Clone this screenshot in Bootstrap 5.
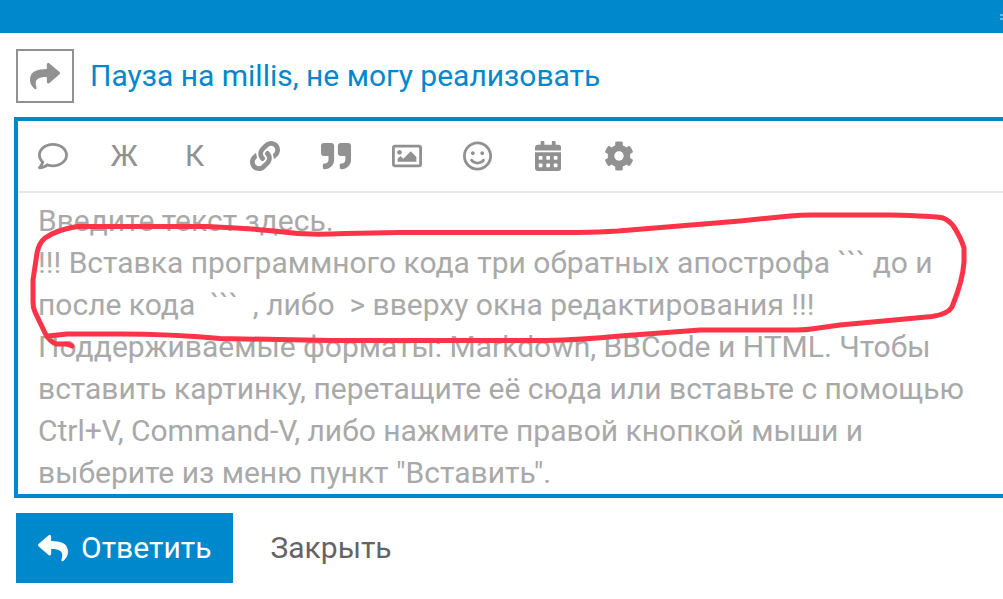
<!DOCTYPE html>
<html lang="ru">
<head>
<meta charset="utf-8">
<meta name="viewport" content="width=device-width, initial-scale=1">
<title>Ответ в теме</title>
<link rel="stylesheet" href="https://cdn.jsdelivr.net/npm/bootstrap@5.3.0/dist/css/bootstrap.min.css">
<script defer src="https://cdn.jsdelivr.net/npm/bootstrap@5.3.0/dist/js/bootstrap.bundle.min.js"></script>
<style>
  :root { --brand: #0088cc; --icon: #919191; }
  body { font-family: Roboto, "Liberation Sans", sans-serif; font-size: 30px; line-height: 42px; overflow-x: hidden; }
  .topbar { height: 33px; background: var(--brand); }
  .grip { width: 3px; height: 6px; margin-top: 1px; border: solid #66b8e0; border-width: 2px 0; }
  .btn { --bs-btn-border-radius: 0; --bs-btn-font-size: 30px; --bs-btn-line-height: 42px; }
  .icon { height: 30px; fill: currentColor; display: block; }
  .jump { width: 58px; height: 54px; border: 2px solid var(--icon); color: var(--icon); }
  .topic { color: var(--brand); }
  .topic-row { padding: 16px 16px 14px; }
  .editor { border: 4px solid var(--brand); border-right: 0; margin-left: 14px; }
  .tools { height: 72px; border-bottom: 2px solid #e9e9e9; }
  .tool-row { display: grid; grid-template-columns: repeat(9, 1fr); width: 100%; max-width: 636px; }
  .tool-row .btn { --bs-btn-color: var(--icon); }
  .message { display: block; width: 100%; border: 0; outline: 0; resize: none; overflow: hidden; padding: 7px 20px 0; line-height: 42px; background: transparent; }
  .message::placeholder { color: #a9a9a9; opacity: 1; }
  .marker { position: absolute; left: 0; top: 0; width: 960px; height: 180px; pointer-events: none; }
  .actions { padding: 15px 16px; gap: 37px; }
  .reply { --bs-btn-color: #fff; --bs-btn-bg: var(--brand); --bs-btn-padding-x: 22px; --bs-btn-padding-y: 14px; gap: 13px; }
  .dismiss { --bs-btn-color: #646464; --bs-btn-padding-x: 0; }
</style>
</head>
<body class="bg-white">
<header class="topbar d-flex justify-content-end align-items-center"><span class="grip"></span></header>

<main>
  <div class="topic-row d-flex align-items-center gap-3">
    <button type="button" class="btn jump p-0 d-flex align-items-center justify-content-center" aria-label="Тип ответа">
      <svg class="icon" viewBox="0 0 512 512"><path id="arrow" d="M503.691 189.836L327.687 37.851C312.281 24.546 288 35.347 288 56.015v80.053C127.371 137.907 0 170.1 0 322.326c0 61.441 39.581 122.309 83.333 154.132 13.653 9.931 33.111-2.533 28.077-18.631C66.066 312.814 132.917 274.316 288 272.085V360c0 20.7 24.3 31.453 39.687 18.164l176.004-152c11.071-9.562 11.086-26.753 0-36.328z"/></svg>
    </button>
    <a href="#" class="topic text-decoration-none">Пауза на millis, не могу реализовать</a>
  </div>

  <section class="editor">
    <div class="tools d-flex align-items-center">
      <div class="tool-row" role="toolbar" aria-label="Форматирование">
        <button type="button" class="btn p-0 d-flex align-items-center justify-content-center" aria-label="Цитировать сообщение"><svg class="icon" viewBox="0 0 512 512"><path d="M256 32C114.6 32 0 125.1 0 240c0 47.6 19.9 91.2 52.9 126.3C38 405.7 7 439.1 6.5 439.5c-6.6 7-8.4 17.2-4.6 26S14.4 480 24 480c61.5 0 110-25.7 139.1-46.3C192 442.8 223.2 448 256 448c141.4 0 256-93.1 256-208S397.4 32 256 32zm0 368c-26.7 0-53.1-4.1-78.4-12.1l-22.7-7.2-19.5 13.8c-14.3 10.1-33.9 21.4-57.5 29 7.3-12.1 14.4-25.7 19.9-40.2l10.6-28.1-20.6-21.8C69.7 314.1 48 282.2 48 240c0-88.2 93.3-160 208-160s208 71.8 208 160-93.3 160-208 160z"/></svg></button>
        <button type="button" class="btn p-0">Ж</button>
        <button type="button" class="btn p-0">К</button>
        <button type="button" class="btn p-0 d-flex align-items-center justify-content-center" aria-label="Ссылка"><svg class="icon" viewBox="0 0 512 512"><path d="M326.612 185.391c59.747 59.809 58.927 155.698.36 214.59-.11.12-.24.25-.36.37l-67.2 67.2c-59.27 59.27-155.699 59.262-214.96 0-59.27-59.26-59.27-155.7 0-214.96l37.106-37.106c9.84-9.84 26.786-3.3 27.294 10.606.648 17.722 3.826 35.527 9.69 52.721 1.986 5.822.567 12.262-3.783 16.612l-13.087 13.087c-28.026 28.026-28.905 73.66-1.155 101.96 28.024 28.579 74.086 28.749 102.325.51l67.2-67.19c28.191-28.191 28.073-73.757 0-101.83-3.701-3.694-7.429-6.564-10.341-8.569a16.037 16.037 0 0 1-6.947-12.606c-.396-10.567 3.348-21.456 11.698-29.806l21.054-21.055c5.521-5.521 14.182-6.199 20.584-1.731a152.482 152.482 0 0 1 20.522 17.197zM467.547 44.449c-59.261-59.262-155.69-59.27-214.96 0l-67.2 67.2c-.12.12-.25.25-.36.37-58.566 58.892-59.387 154.781.36 214.59a152.454 152.454 0 0 0 20.521 17.196c6.402 4.468 15.064 3.789 20.584-1.731l21.054-21.055c8.35-8.35 12.094-19.239 11.698-29.806a16.037 16.037 0 0 0-6.947-12.606c-2.912-2.005-6.64-4.875-10.341-8.569-28.073-28.073-28.191-73.639 0-101.83l67.2-67.19c28.239-28.239 74.3-28.069 102.325.51 27.75 28.3 26.872 73.934-1.155 101.96l-13.087 13.087c-4.35 4.35-5.769 10.79-3.783 16.612 5.864 17.194 9.042 34.999 9.69 52.721.509 13.906 17.454 20.446 27.294 10.606l37.106-37.106c59.271-59.259 59.271-155.699.001-214.959z"/></svg></button>
        <button type="button" class="btn p-0 d-flex align-items-center justify-content-center" aria-label="Цитата"><svg class="icon" viewBox="0 0 512 512"><path d="M464 32H336c-26.5 0-48 21.5-48 48v128c0 26.5 21.5 48 48 48h80v64c0 35.3-28.7 64-64 64h-8c-13.3 0-24 10.7-24 24v48c0 13.3 10.7 24 24 24h8c88.4 0 160-71.6 160-160V80c0-26.5-21.5-48-48-48zm-288 0H48C21.5 32 0 53.5 0 80v128c0 26.5 21.5 48 48 48h80v64c0 35.3-28.7 64-64 64h-8c-13.3 0-24 10.7-24 24v48c0 13.3 10.7 24 24 24h8c88.4 0 160-71.6 160-160V80c0-26.5-21.5-48-48-48z"/></svg></button>
        <button type="button" class="btn p-0 d-flex align-items-center justify-content-center" aria-label="Изображение"><svg class="icon" viewBox="0 0 512 512"><path d="M464 64H48C21.49 64 0 85.49 0 112v288c0 26.51 21.49 48 48 48h416c26.51 0 48-21.49 48-48V112c0-26.51-21.49-48-48-48zm-6 336H54a6 6 0 0 1-6-6V118a6 6 0 0 1 6-6h404a6 6 0 0 1 6 6v276a6 6 0 0 1-6 6zM128 152c-22.091 0-40 17.909-40 40s17.909 40 40 40 40-17.909 40-40-17.909-40-40-40zM96 352h320v-80l-87.515-87.515c-4.686-4.686-12.284-4.686-16.971 0L192 304l-39.515-39.515c-4.686-4.686-12.284-4.686-16.971 0L96 304v48z"/></svg></button>
        <button type="button" class="btn p-0 d-flex align-items-center justify-content-center" aria-label="Эмодзи"><svg class="icon" viewBox="0 0 496 512"><path d="M248 8C111 8 0 119 0 256s111 248 248 248 248-111 248-248S385 8 248 8zm0 448c-110.3 0-200-89.7-200-200S137.7 56 248 56s200 89.7 200 200-89.7 200-200 200zm-80-216c17.7 0 32-14.3 32-32s-14.3-32-32-32-32 14.3-32 32 14.3 32 32 32zm160 0c17.7 0 32-14.3 32-32s-14.3-32-32-32-32 14.3-32 32 14.3 32 32 32zm4 72.6c-20.8 25-51.5 39.4-84 39.4s-63.2-14.3-84-39.4c-8.5-10.2-23.7-11.5-33.8-3.1-10.2 8.5-11.5 23.6-3.1 33.8 30 36 74.1 56.6 120.9 56.6s90.9-20.6 120.9-56.6c8.5-10.2 7.1-25.3-3.1-33.8-10.1-8.4-25.3-7.1-33.8 3.1z"/></svg></button>
        <button type="button" class="btn p-0 d-flex align-items-center justify-content-center" aria-label="Дата"><svg class="icon" viewBox="0 0 448 512"><path d="M400 64h-48V16c0-8.8-7.2-16-16-16h-32c-8.8 0-16 7.2-16 16v48H160V16c0-8.8-7.2-16-16-16h-32c-8.8 0-16 7.2-16 16v48H48C21.5 64 0 85.5 0 112v48h448v-48c0-26.5-21.5-48-48-48z"/><path fill-rule="evenodd" d="M0 464c0 26.500 21.500 48 48 48h352c26.500 0 48-21.500 48-48V192H0zM76 256h40q12 0 12 12v40q0 12-12 12H76q-12 0-12-12v-40q0-12 12-12zm128 0h40q12 0 12 12v40q0 12-12 12h-40q-12 0-12-12v-40q0-12 12-12zm128 0h40q12 0 12 12v40q0 12-12 12h-40q-12 0-12-12v-40q0-12 12-12zM76 384h40q12 0 12 12v40q0 12-12 12H76q-12 0-12-12v-40q0-12 12-12zm128 0h40q12 0 12 12v40q0 12-12 12h-40q-12 0-12-12v-40q0-12 12-12zm128 0h40q12 0 12 12v40q0 12-12 12h-40q-12 0-12-12v-40q0-12 12-12z"/></svg></button>
        <button type="button" class="btn p-0 d-flex align-items-center justify-content-center" aria-label="Настройки"><svg class="icon" viewBox="0 0 512 512"><path d="M487.4 315.7l-42.6-24.6c4.3-23.2 4.3-47 0-70.2l42.6-24.6c4.9-2.8 7.1-8.6 5.5-14-11.1-35.6-30-67.8-54.7-94.6-3.8-4.1-10-5.1-14.8-2.3L380.8 110c-17.9-15.4-38.5-27.3-60.8-35.1V25.8c0-5.6-3.9-10.5-9.4-11.7-36.7-8.2-74.3-7.8-109.2 0-5.5 1.2-9.4 6.1-9.4 11.7V75c-22.2 7.9-42.8 19.8-60.8 35.1L88.7 85.5c-4.9-2.8-11-1.9-14.8 2.3-24.7 26.7-43.6 58.9-54.7 94.6-1.7 5.4.6 11.2 5.5 14L67.3 221c-4.3 23.2-4.3 47 0 70.2l-42.6 24.6c-4.9 2.8-7.1 8.6-5.5 14 11.1 35.6 30 67.8 54.7 94.6 3.8 4.1 10 5.1 14.8 2.3l42.6-24.6c17.9 15.4 38.5 27.3 60.8 35.1v49.2c0 5.6 3.9 10.5 9.4 11.7 36.7 8.2 74.3 7.8 109.2 0 5.5-1.2 9.4-6.1 9.4-11.7v-49.2c22.2-7.9 42.8-19.8 60.8-35.1l42.6 24.6c4.9 2.8 11 1.9 14.8-2.3 24.7-26.7 43.6-58.9 54.7-94.6 1.5-5.5-.7-11.3-5.6-14.1zM256 336c-44.1 0-80-35.9-80-80s35.9-80 80-80 80 35.9 80 80-35.9 80-80 80z"/></svg></button>
      </div>
    </div>
    <div class="position-relative">
      <textarea class="message" rows="7" aria-label="Текст ответа" placeholder="Введите текст здесь.&#10;!!! Вставка программного кода три обратных апострофа ``` до и после кода  ```  , либо  &gt; вверху окна редактирования !!!&#10;Поддерживаемые форматы: Markdown, BBCode и HTML. Чтобы вставить картинку, перетащите её сюда или вставьте с помощью Ctrl+V, Command-V, либо нажмите правой кнопкой мыши и выберите из меню пункт &quot;Вставить&quot;."></textarea>
      <!-- hand-drawn loop around the note about code blocks -->
      <svg class="marker" viewBox="18 193 960 180" fill="none" stroke="#ff3347" stroke-width="5" stroke-linecap="round" stroke-linejoin="round" aria-hidden="true"><path d="M72 346Q69 344 65 344H56Q51 342 46 335L35 312Q33 308 33 302V280L37 253Q39 243 45 238Q56 230 77 226.500H207Q250 228 293 233Q310 235 345 233.500L400 232.500H578Q600 232 618 231L740 221L790 216Q800 215 812 215H890Q935 216 943 218Q950 221 954 227Q961 238 964 248V262Q963 280 952 307Q948 314 932 316.500L840 325L815 328.500Q806 330 796 330H700L620 336Q580 340 545 340.500H330L220 338.500Q170 334 120 334H67L48 336"/></svg>
    </div>
  </section>

  <div class="actions d-flex align-items-center">
    <button type="button" class="btn reply border-0 d-flex align-items-center">
      <svg class="icon" viewBox="0 0 512 512" aria-hidden="true"><use href="#arrow" transform="matrix(-1 0 0 1 512 0)"/></svg>
      <span>Ответить</span>
    </button>
    <button type="button" class="btn dismiss border-0">Закрыть</button>
  </div>
</main>
</body>
</html>
